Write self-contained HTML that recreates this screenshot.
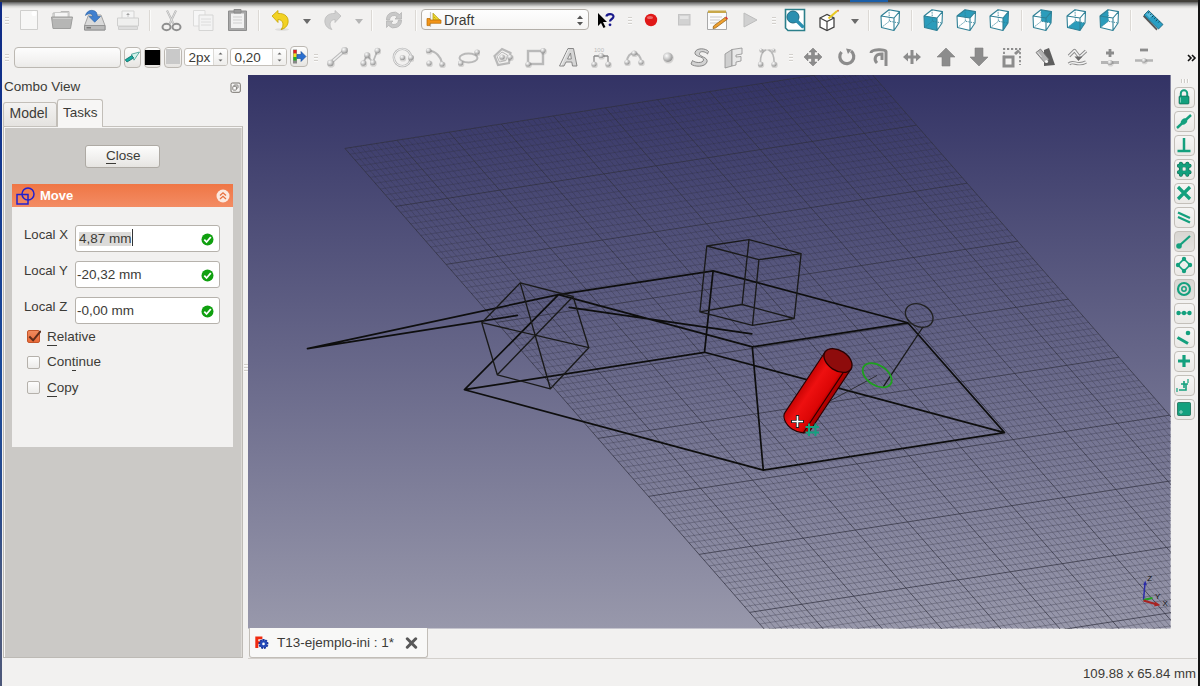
<!DOCTYPE html><html><head><meta charset="utf-8"><style>
*{box-sizing:border-box;margin:0;padding:0}
html,body{width:1200px;height:686px;overflow:hidden;background:#f2f1f0;font-family:"Liberation Sans",sans-serif;color:#3c3c3c}
.a{position:absolute}
.t{position:absolute;white-space:pre;font-size:13.5px;line-height:16px;color:#3c3b37}
.btn{position:absolute;border:1px solid #b8b4ae;border-radius:3px;background:linear-gradient(#fdfdfc,#f0efed 60%,#e6e4e1)}
.grip{position:absolute;width:4px;height:8px;background:repeating-linear-gradient(#d3d0cc 0 1px,#fbfbfa 1px 2px,transparent 2px 3px)}
.sep{position:absolute;width:1px;height:21px;top:9.5px;background:#dcd9d5;box-shadow:1px 0 0 #fbfbfa}
.inp{position:absolute;background:#fff;border:1px solid #b6b2ac;border-radius:3px}
.cb{position:absolute;width:13px;height:13px;border:1px solid #b5b1ab;border-radius:2px;background:linear-gradient(#fdfdfd,#ecebe9)}
u{text-decoration:none;border-bottom:1px solid #3c3b37;padding-bottom:0.5px}
</style></head><body><svg width="0" height="0" style="position:absolute"><defs><radialGradient id="sph" cx="0.38" cy="0.35" r="0.65"><stop offset="0" stop-color="#fbfbfb"/><stop offset="0.55" stop-color="#c9c9c9"/><stop offset="1" stop-color="#959595"/></radialGradient></defs></svg><div class="a" style="left:0;top:0;width:1200px;height:9px;background:linear-gradient(#43413b 0,#43413b 1.7px,#6a6a69 2.5px,#888887 3.5px,#b0b0af 5px,#d8d8d6 6.5px,#eceae8 8px,#f2f1f0 9px)"></div><div class="a" style="left:850px;top:0;width:38px;height:2px;background:#1c5fa8"></div><div class="a" style="left:0;top:2px;width:2px;height:684px;background:linear-gradient(#0f2a85,#1a4a9a 55%,#2a4a8a 75%,#4a5a80 85%,#4d587a)"></div><div class="a" style="left:1198px;top:0;width:2px;height:686px;background:#141414"></div><div class="grip" style="left:5px;top:17px"></div><svg class="a" style="left:19px;top:9px" width="20" height="22" viewBox="0 0 20 22"><path d="M1.5 1.5H18.5V20.5H1.5Z" fill="#f7f7f6" stroke="#cfcfcd" stroke-width="1"/><circle cx="15" cy="4.5" r="2.5" fill="#fff"/></svg><svg class="a" style="left:50px;top:9px" width="24" height="22" viewBox="0 0 24 22"><path d="M3 4H10L11 2.5H19V9H3Z" fill="#e9e9e8" stroke="#b9b9b8"/><path d="M4.5 3.5H18V12H4.5Z" fill="#f5f5f5" stroke="#c4c4c3" stroke-width="0.8"/><path d="M1.5 8H22.5L20.5 19.5H3Z" fill="#b6b6b5" stroke="#9e9e9d"/><path d="M3 9.5H21.5" stroke="#cececd"/></svg><svg class="a" style="left:83px;top:8px" width="24" height="24" viewBox="0 0 24 24"><path d="M5.5 7H18L22 17.5V22H1.5V17.5Z" fill="#dadada" stroke="#9c9c9c" stroke-width="0.9"/><path d="M1.5 17.5H22V22H1.5Z" fill="#b9b9b9" stroke="#8e8e8e" stroke-width="0.9"/><path d="M3.5 19.8H8" stroke="#6a6a6a" stroke-width="1.2"/><path d="M2.5 7.5C3.5 2.5 10 0.5 13.5 4.5L14.5 8.5H17.5L11.7 14.2L6 8.5H9.8C9.3 5.5 6 4.5 2.5 7.5Z" fill="#3f7fcf" stroke="#2a5fa0" stroke-width="0.6"/></svg><svg class="a" style="left:116px;top:9px" width="24" height="22" viewBox="0 0 24 22"><path d="M6 2H18V10H6Z" fill="#f4f4f4" stroke="#d3d3d2"/><path d="M12 4V8M10.5 5.5L12 4L13.5 5.5" stroke="#c6c6c6"/><path d="M1.5 9H22.5V17H1.5Z" fill="#efefee" stroke="#cfcfce"/><path d="M2.5 17.5H21.5V20.5H2.5Z" fill="#dedede" stroke="#cfcfce"/></svg><div class="sep" style="left:149px"></div><svg class="a" style="left:161px;top:9px" width="21" height="23" viewBox="0 0 21 23"><path d="M6 1.5L12.5 15M15 1.5L8.5 15" stroke="#b2b2b2" stroke-width="2"/><path d="M6 1.5L12.5 15M15 1.5L8.5 15" stroke="#e6e6e6" stroke-width="0.8"/><ellipse cx="5.5" cy="18" rx="4" ry="3.2" fill="none" stroke="#8f8f8f" stroke-width="2"/><ellipse cx="15.5" cy="18" rx="4" ry="3.2" fill="none" stroke="#8f8f8f" stroke-width="2"/></svg><svg class="a" style="left:192px;top:9px" width="23" height="23" viewBox="0 0 23 23"><path d="M1.5 1.5H13V17H1.5Z" fill="#f6f6f6" stroke="#dcdcdb"/><path d="M7 6H21V21.5H7Z" fill="#f3f3f3" stroke="#d5d5d4"/><path d="M9 10H19M9 13H19M9 16H19" stroke="#dcdcdc"/></svg><svg class="a" style="left:227px;top:8px" width="21" height="24" viewBox="0 0 21 24"><path d="M1.5 3H19.5V22.5H1.5Z" fill="#a8a8a8" stroke="#8e8e8e"/><path d="M4 5.5H17V20H4Z" fill="#f2f2f2"/><path d="M7 1.5H14V5H7Z" fill="#9d9d9d" stroke="#8a8a8a"/><path d="M6 9H15M6 12H15M6 15H15" stroke="#cfcfcf"/></svg><div class="sep" style="left:258px"></div><svg class="a" style="left:270px;top:9px" width="22" height="22" viewBox="0 0 22 22"><path d="M2 7L8 1.5V4.5C15 4 19 8 18 14C17 18 14 20 11 20.5C14 17.5 14 10.5 8 10.5V13.5Z" fill="#f2d224" stroke="#c7a400" stroke-width="0.8"/><ellipse cx="12" cy="20.5" rx="7" ry="1.3" fill="#000" opacity="0.08"/></svg><svg class="a" style="left:302.5px;top:19px" width="8" height="6" viewBox="0 0 8 6"><path d="M0 0H8L4 5Z" fill="#6a6a6a"/></svg><svg class="a" style="left:321px;top:9px" width="22" height="22" viewBox="0 0 22 22"><path d="M20 7L14 1.5V4.5C7 4 3 8 4 14C5 18 8 20 11 20.5C8 17.5 8 10.5 14 10.5V13.5Z" fill="#cfcfcf" stroke="#bdbdbd" stroke-width="0.8"/></svg><svg class="a" style="left:354.5px;top:19px" width="8" height="6" viewBox="0 0 8 6"><path d="M0 0H8L4 5Z" fill="#b5b5b5"/></svg><div class="sep" style="left:371px"></div><svg class="a" style="left:383px;top:9px" width="22" height="22" viewBox="0 0 22 22"><path d="M3.5 11A7.5 7.5 0 0 1 16.5 5.5L18.5 3.5V10H12L14.2 7.8A4.5 4.5 0 0 0 6.5 11Z" fill="#c8c8c8" stroke="#b0b0b0" stroke-width="0.7"/><path d="M18.5 11A7.5 7.5 0 0 1 5.5 16.5L3.5 18.5V12H10L7.8 14.2A4.5 4.5 0 0 0 15.5 11Z" fill="#c8c8c8" stroke="#b0b0b0" stroke-width="0.7"/></svg><div class="sep" style="left:415px"></div><div class="btn" style="left:421px;top:9px;width:167.5px;height:21px;border-color:#b3afa9;border-radius:4px;background:linear-gradient(#fefefe,#f5f4f3)"></div><svg class="a" style="left:425px;top:11px" width="18" height="18" viewBox="0 0 18 18"><path d="M5.5 1V16" stroke="#c8c8c8" stroke-width="1.2"/><path d="M8 2.2V9.2H15Z" fill="#eed630" stroke="#a89000" stroke-width="0.7"/><path d="M9 6L10.5 7.5" stroke="#a89000" stroke-width="0.6"/><path d="M2 7.5H5V9H16V12.3H5V14.6H2Z" fill="#f29418" stroke="#b86a00" stroke-width="0.7"/></svg><div class="t" style="left:444px;top:12px;font-size:14px">Draft</div><svg class="a" style="left:576px;top:14px" width="8" height="13" viewBox="0 0 8 13"><path d="M1 5L4 1.5L7 5ZM1 8L4 11.5L7 8Z" fill="#555"/></svg><svg class="a" style="left:597px;top:12px" width="19" height="17" viewBox="0 0 19 17"><path d="M1 1V14L4 11L6.5 16L8.5 15L6 10H10Z" fill="#000"/><path d="M9.5 4.5C9.5 1.5 16.5 1 16.5 4.5C16.5 7 13 7 13 9.5" stroke="#1a1a8c" stroke-width="2.2" fill="none"/><circle cx="13" cy="12.8" r="1.4" fill="#1a1a8c"/></svg><div class="grip" style="left:628px;top:17px"></div><svg class="a" style="left:644px;top:13px" width="14" height="14" viewBox="0 0 14 14"><circle cx="7" cy="7" r="6.2" fill="#e01818"/><ellipse cx="6" cy="4.5" rx="3" ry="1.6" fill="#fff" opacity="0.35"/></svg><svg class="a" style="left:678px;top:14px" width="13" height="12" viewBox="0 0 13 12"><rect x="0.5" y="0.5" width="11.5" height="10.5" fill="#d2d2d2" stroke="#c4c4c4"/><rect x="2" y="2" width="8.5" height="3" fill="#e4e4e4"/></svg><svg class="a" style="left:706px;top:9px" width="23" height="22" viewBox="0 0 23 22"><path d="M1.5 3H20.5V20.5H1.5Z" fill="#fbfbfb" stroke="#a9a9a9"/><path d="M2 1.5H20V4H2Z" fill="#c8a84a"/><path d="M4 8H16M4 11H14M4 14H12" stroke="#c9c9c9"/><path d="M7.5 17L19 8.5L21 10.5L9.5 19L7 19.5Z" fill="#f0a030" stroke="#8a5a10" stroke-width="0.7"/><path d="M19 8.5L21 10.5L22 9.5L20 7.5Z" fill="#e03030"/></svg><svg class="a" style="left:743px;top:12px" width="15" height="16" viewBox="0 0 15 16"><path d="M1 1L14 8L1 15Z" fill="#d0d0d0" stroke="#bdbdbd"/></svg><div class="grip" style="left:772px;top:17px"></div><svg class="a" style="left:784px;top:8px" width="22" height="24" viewBox="0 0 22 24"><path d="M1.5 1.5H20.5V22.5H4L1.5 20Z" fill="#fff" stroke="#2b7f8a" stroke-width="1.6"/><circle cx="9" cy="9" r="6" fill="#2a8fb0" stroke="#1d6a80" stroke-width="1"/><path d="M13 13L18.5 18.5" stroke="#2a8fb0" stroke-width="3.2" stroke-linecap="round"/></svg><svg class="a" style="left:818px;top:9px" width="22" height="23" viewBox="0 0 22 23"><path d="M2 9L9 5.5L16 9V18L9 21.5L2 18Z" fill="#fff" stroke="#444" stroke-width="1.3"/><path d="M2 9L9 12.5L16 9M9 12.5V21.5" stroke="#444" stroke-width="1.2" fill="none"/><path d="M10.5 9.5L19 2" stroke="#e8c820" stroke-width="2"/><circle cx="20" cy="1.8" r="1" fill="#e07a30"/></svg><svg class="a" style="left:850.5px;top:19px" width="8" height="6" viewBox="0 0 8 6"><path d="M0 0H8L4 5Z" fill="#6a6a6a"/></svg><div class="sep" style="left:868px"></div><svg class="a" style="left:880px;top:9px" width="21" height="23" viewBox="0 0 21 23"><polygon points="1,7 9,0.8 19.5,2.6 19,14 14,21.5 1.5,18.5" fill="#fff"/><path d="M9 0.8L9.4 12.2L19 14M9.4 12.2L1.5 18.5" stroke="#2f8096" stroke-width="0.9" stroke-dasharray="1.4 1" fill="none"/><path d="M1 7L14 9L14 21.5L1.5 18.5ZM1 7L9 0.8L19.5 2.6L14 9M19.5 2.6L19 14L14 21.5" stroke="#2f8096" stroke-width="1.1" fill="none" stroke-linejoin="round"/></svg><div class="sep" style="left:911px"></div><svg class="a" style="left:923px;top:9px" width="21" height="23" viewBox="0 0 21 23"><polygon points="1,7 9,0.8 19.5,2.6 19,14 14,21.5 1.5,18.5" fill="#fff"/><polygon points="1,7 14,9 14,21.5 1.5,18.5" fill="#2b9cbb"/><path d="M9 0.8L9.4 12.2L19 14M9.4 12.2L1.5 18.5" stroke="#2f8096" stroke-width="0.9" stroke-dasharray="1.4 1" fill="none"/><path d="M1 7L14 9L14 21.5L1.5 18.5ZM1 7L9 0.8L19.5 2.6L14 9M19.5 2.6L19 14L14 21.5" stroke="#2f8096" stroke-width="1.1" fill="none" stroke-linejoin="round"/></svg><svg class="a" style="left:956px;top:9px" width="21" height="23" viewBox="0 0 21 23"><polygon points="1,7 9,0.8 19.5,2.6 19,14 14,21.5 1.5,18.5" fill="#fff"/><polygon points="1,7 9,0.8 19.5,2.6 14,9" fill="#2b9cbb"/><path d="M9 0.8L9.4 12.2L19 14M9.4 12.2L1.5 18.5" stroke="#2f8096" stroke-width="0.9" stroke-dasharray="1.4 1" fill="none"/><path d="M1 7L14 9L14 21.5L1.5 18.5ZM1 7L9 0.8L19.5 2.6L14 9M19.5 2.6L19 14L14 21.5" stroke="#2f8096" stroke-width="1.1" fill="none" stroke-linejoin="round"/></svg><svg class="a" style="left:989px;top:9px" width="21" height="23" viewBox="0 0 21 23"><polygon points="1,7 9,0.8 19.5,2.6 19,14 14,21.5 1.5,18.5" fill="#fff"/><polygon points="14,9 19.5,2.6 19,14 14,21.5" fill="#2b9cbb"/><path d="M9 0.8L9.4 12.2L19 14M9.4 12.2L1.5 18.5" stroke="#2f8096" stroke-width="0.9" stroke-dasharray="1.4 1" fill="none"/><path d="M1 7L14 9L14 21.5L1.5 18.5ZM1 7L9 0.8L19.5 2.6L14 9M19.5 2.6L19 14L14 21.5" stroke="#2f8096" stroke-width="1.1" fill="none" stroke-linejoin="round"/></svg><div class="sep" style="left:1021px"></div><svg class="a" style="left:1032px;top:9px" width="21" height="23" viewBox="0 0 21 23"><polygon points="1,7 9,0.8 19.5,2.6 19,14 14,21.5 1.5,18.5" fill="#fff"/><polygon points="9,0.8 19.5,2.6 19,14 9.4,12.2" fill="#2b9cbb"/><path d="M9 0.8L9.4 12.2L19 14M9.4 12.2L1.5 18.5" stroke="#2f8096" stroke-width="0.9" stroke-dasharray="1.4 1" fill="none"/><path d="M1 7L14 9L14 21.5L1.5 18.5ZM1 7L9 0.8L19.5 2.6L14 9M19.5 2.6L19 14L14 21.5" stroke="#2f8096" stroke-width="1.1" fill="none" stroke-linejoin="round"/></svg><svg class="a" style="left:1065.5px;top:9px" width="21" height="23" viewBox="0 0 21 23"><polygon points="1,7 9,0.8 19.5,2.6 19,14 14,21.5 1.5,18.5" fill="#fff"/><polygon points="1.5,18.5 9.4,12.2 19,14 14,21.5" fill="#2b9cbb"/><path d="M9 0.8L9.4 12.2L19 14M9.4 12.2L1.5 18.5" stroke="#2f8096" stroke-width="0.9" stroke-dasharray="1.4 1" fill="none"/><path d="M1 7L14 9L14 21.5L1.5 18.5ZM1 7L9 0.8L19.5 2.6L14 9M19.5 2.6L19 14L14 21.5" stroke="#2f8096" stroke-width="1.1" fill="none" stroke-linejoin="round"/></svg><svg class="a" style="left:1098.5px;top:9px" width="21" height="23" viewBox="0 0 21 23"><polygon points="1,7 9,0.8 19.5,2.6 19,14 14,21.5 1.5,18.5" fill="#fff"/><polygon points="1,7 9,0.8 9.4,12.2 1.5,18.5" fill="#2b9cbb"/><path d="M9 0.8L9.4 12.2L19 14M9.4 12.2L1.5 18.5" stroke="#2f8096" stroke-width="0.9" stroke-dasharray="1.4 1" fill="none"/><path d="M1 7L14 9L14 21.5L1.5 18.5ZM1 7L9 0.8L19.5 2.6L14 9M19.5 2.6L19 14L14 21.5" stroke="#2f8096" stroke-width="1.1" fill="none" stroke-linejoin="round"/></svg><div class="sep" style="left:1130px"></div><svg class="a" style="left:1141px;top:9px" width="23" height="23" viewBox="0 0 23 23"><path d="M3 6L16.5 20L15.5 21.5L2 7.5Z" fill="#3a3a3a" opacity="0.85"/><path d="M3 6L7.5 1.5L22 15.5L17.5 20Z" fill="#2a9fc4" stroke="#145a72" stroke-width="0.8" stroke-linejoin="round"/><path d="M5 5L8 2.5L12 6.5L8.5 9Z" fill="#7fd4f0" opacity="0.6"/><path d="M8.5 2.8L6.8 4.4M10.5 4.7L9.3 5.9M12.5 6.6L10.8 8.2M14.5 8.5L13.3 9.7M16.5 10.4L14.8 12M18.5 12.3L17.3 13.5" stroke="#0a3040" stroke-width="0.9"/></svg><div class="grip" style="left:5px;top:54px"></div><div class="btn" style="left:13.5px;top:46.5px;width:107.5px;height:21px;border-color:#bcb8b2;border-radius:4px;background:linear-gradient(#fdfdfd,#f2f1f0 70%,#ebeae8)"></div><div class="btn" style="left:123.5px;top:46.5px;width:17.5px;height:21px;border-color:#bcb8b2;border-radius:4px"></div><svg class="a" style="left:124px;top:49px" width="17" height="16" viewBox="0 0 17 16"><path d="M7.5 5.2L15.5 3L10 11.2Z" fill="#d4f4ec" stroke="#3a9a90" stroke-width="0.8" stroke-linejoin="round"/><path d="M1.2 10.8L7.8 6.6L9.6 9L3 13Z" fill="#16aca2" stroke="#0b6a62" stroke-width="0.8" stroke-linejoin="round"/></svg><div class="btn" style="left:143.5px;top:46.5px;width:17.5px;height:21px;border-color:#bcb8b2;border-radius:4px"></div><div class="a" style="left:145px;top:49.5px;width:15px;height:15px;background:#000"></div><div class="btn" style="left:164px;top:46.5px;width:17.5px;height:21px;border-color:#bcb8b2;border-radius:4px"></div><div class="a" style="left:165.5px;top:49px;width:14.5px;height:15px;background:#c9c9c9"></div><div class="inp" style="left:184px;top:48px;width:43.5px;height:17.5px;border-color:#c4c0ba;overflow:hidden"><div class="a" style="left:27.5px;top:0;width:20px;height:16px;border-left:1px solid #dcdad6;background:linear-gradient(#fefefe,#eeedeb)"></div></div><div class="t" style="left:188.5px;top:50px;font-size:13.5px">2px</div><svg class="a" style="left:216.5px;top:50px" width="7" height="14" viewBox="0 0 7 14"><path d="M1.5 4.5L3.5 2.5L5.5 4.5ZM1.5 9.5L3.5 11.5L5.5 9.5Z" fill="#666"/></svg><div class="inp" style="left:230px;top:48px;width:57px;height:17.5px;border-color:#c4c0ba;overflow:hidden"><div class="a" style="left:41px;top:0;width:20px;height:16px;border-left:1px solid #dcdad6;background:linear-gradient(#fefefe,#eeedeb)"></div></div><div class="t" style="left:234.5px;top:50px;font-size:13.5px">0,20</div><svg class="a" style="left:276px;top:50px" width="7" height="14" viewBox="0 0 7 14"><path d="M1.5 4.5L3.5 2.5L5.5 4.5ZM1.5 9.5L3.5 11.5L5.5 9.5Z" fill="#666"/></svg><div class="btn" style="left:290px;top:46px;width:17.5px;height:21px;border-color:#bcb8b2;border-radius:4px"></div><svg class="a" style="left:291px;top:48px" width="16" height="17" viewBox="0 0 16 17"><rect x="2" y="1.5" width="4" height="14" fill="#888"/><rect x="2.5" y="2" width="3" height="3.5" fill="#e02020"/><rect x="2.5" y="5.5" width="3" height="3.5" fill="#f0e020"/><rect x="2.5" y="9" width="3" height="3.5" fill="#20b020"/><path d="M6 6.5H10V3.5L15 8.5L10 13.5V10.5H6Z" fill="#2a6fd0" stroke="#1a4a90" stroke-width="0.6"/></svg><div class="grip" style="left:314px;top:54px"></div><svg class="a" style="left:326px;top:47px" width="22" height="22" viewBox="0 0 22 22"><path d="M5 15.4L18 4" stroke="#b9b9b9" stroke-width="3.5"/><path d="M5 15.4L18 4" stroke="#eee" stroke-width="1.5"/><circle cx="5.0" cy="16.9" r="3.8000000000000003" fill="#000" opacity="0.12"/><circle cx="4.4" cy="16" r="3.2" fill="url(#sph)"/><circle cx="19.1" cy="4.2" r="3.8000000000000003" fill="#000" opacity="0.12"/><circle cx="18.5" cy="3.3" r="3.2" fill="url(#sph)"/></svg><svg class="a" style="left:359px;top:47px" width="22" height="22" viewBox="0 0 22 22"><path d="M4.3 16L8 8L13.8 15.5L18.4 3.5" stroke="#b9b9b9" stroke-width="1.8" fill="none"/><circle cx="4.8999999999999995" cy="16.9" r="3.4" fill="#000" opacity="0.12"/><circle cx="4.3" cy="16" r="2.8" fill="url(#sph)"/><circle cx="8.6" cy="8.9" r="3.4" fill="#000" opacity="0.12"/><circle cx="8" cy="8" r="2.8" fill="url(#sph)"/><circle cx="14.4" cy="16.4" r="3.4" fill="#000" opacity="0.12"/><circle cx="13.8" cy="15.5" r="2.8" fill="url(#sph)"/><circle cx="19.0" cy="4.4" r="3.4" fill="#000" opacity="0.12"/><circle cx="18.4" cy="3.5" r="2.8" fill="url(#sph)"/></svg><svg class="a" style="left:392px;top:47px" width="22" height="22" viewBox="0 0 22 22"><circle cx="10.4" cy="10.5" r="8.6" fill="none" stroke="#b9b9b9" stroke-width="2.4"/><circle cx="10.4" cy="10.5" r="8.6" fill="none" stroke="#f6f6f6" stroke-width="0.9"/><circle cx="11.0" cy="11.4" r="3.2" fill="#000" opacity="0.12"/><circle cx="10.4" cy="10.5" r="2.6" fill="url(#sph)"/><circle cx="19.400000000000002" cy="11.4" r="3.4" fill="#000" opacity="0.12"/><circle cx="18.8" cy="10.5" r="2.8" fill="url(#sph)"/></svg><svg class="a" style="left:425px;top:47px" width="22" height="22" viewBox="0 0 22 22"><path d="M3.5 3.5C11 4 16 10 17 16" stroke="#b9b9b9" stroke-width="2.2" fill="none"/><circle cx="4.1" cy="4.4" r="3.2" fill="#000" opacity="0.12"/><circle cx="3.5" cy="3.5" r="2.6" fill="url(#sph)"/><circle cx="17.6" cy="17.9" r="3.2" fill="#000" opacity="0.12"/><circle cx="17" cy="17" r="2.6" fill="url(#sph)"/><circle cx="4.6" cy="16.9" r="3.2" fill="#000" opacity="0.12"/><circle cx="4" cy="16" r="2.6" fill="url(#sph)"/></svg><svg class="a" style="left:458px;top:47px" width="22" height="22" viewBox="0 0 22 22"><ellipse cx="10.5" cy="11" rx="9" ry="4.5" fill="none" stroke="#b9b9b9" stroke-width="2"/><circle cx="19.6" cy="5.9" r="3.2" fill="#000" opacity="0.12"/><circle cx="19" cy="5" r="2.6" fill="url(#sph)"/><circle cx="3.1" cy="16.9" r="3.2" fill="#000" opacity="0.12"/><circle cx="2.5" cy="16" r="2.6" fill="url(#sph)"/></svg><svg class="a" style="left:492px;top:47px" width="22" height="22" viewBox="0 0 22 22"><path d="M10 2L18.5 6L17 16L6 18L2.5 9Z" fill="none" stroke="#b9b9b9" stroke-width="2.2"/><path d="M10 5L15.5 8L14 13.5L7.5 15L5 9.5Z" fill="none" stroke="#b9b9b9" stroke-width="1"/><circle cx="10.6" cy="10.9" r="3.2" fill="#000" opacity="0.12"/><circle cx="10" cy="10" r="2.6" fill="url(#sph)"/><circle cx="18.6" cy="10.9" r="3.2" fill="#000" opacity="0.12"/><circle cx="18" cy="10" r="2.6" fill="url(#sph)"/></svg><svg class="a" style="left:525px;top:47px" width="22" height="22" viewBox="0 0 22 22"><rect x="3" y="4" width="15" height="13" fill="none" stroke="#b9b9b9" stroke-width="2.4"/><circle cx="18.6" cy="4.4" r="3.2" fill="#000" opacity="0.12"/><circle cx="18" cy="3.5" r="2.6" fill="url(#sph)"/><circle cx="3.6" cy="17.9" r="3.2" fill="#000" opacity="0.12"/><circle cx="3" cy="17" r="2.6" fill="url(#sph)"/></svg><svg class="a" style="left:558px;top:47px" width="22" height="22" viewBox="0 0 22 22"><path d="M1.5 19L10 1.5H15.5L19 19H14.5L13.8 15H8L6 19Z M9.5 12H13.3L12.5 6Z" fill="#d6d6d6" fill-rule="evenodd" stroke="#7e7e7e" stroke-width="0.9" stroke-linejoin="round"/><path d="M3 18.5L10.5 2.5" stroke="#f8f8f8" stroke-width="0.8"/></svg><svg class="a" style="left:591px;top:47px" width="22" height="22" viewBox="0 0 22 22"><path d="M3 9V17M17 9V17M3 9H17" stroke="#8a8a8a" stroke-width="1.3" fill="none"/><circle cx="3.6" cy="17.9" r="3.2" fill="#000" opacity="0.12"/><circle cx="3" cy="17" r="2.6" fill="url(#sph)"/><circle cx="17.6" cy="17.9" r="3.2" fill="#000" opacity="0.12"/><circle cx="17" cy="17" r="2.6" fill="url(#sph)"/><circle cx="10.6" cy="9.4" r="3.2" fill="#000" opacity="0.12"/><circle cx="10" cy="8.5" r="2.6" fill="url(#sph)"/><text x="3" y="5" font-family="Liberation Sans" font-size="6" fill="#bbb">100</text></svg><svg class="a" style="left:624px;top:47px" width="22" height="22" viewBox="0 0 22 22"><path d="M3 15C3 3 17 3 17 15" stroke="#b9b9b9" stroke-width="2" fill="none"/><circle cx="3.6" cy="15.9" r="3.2" fill="#000" opacity="0.12"/><circle cx="3" cy="15" r="2.6" fill="url(#sph)"/><circle cx="17.6" cy="15.9" r="3.2" fill="#000" opacity="0.12"/><circle cx="17" cy="15" r="2.6" fill="url(#sph)"/><circle cx="10.6" cy="6.9" r="3.2" fill="#000" opacity="0.12"/><circle cx="10" cy="6" r="2.6" fill="url(#sph)"/></svg><svg class="a" style="left:657px;top:47px" width="22" height="22" viewBox="0 0 22 22"><circle cx="11.4" cy="11.1" r="5.3999999999999995" fill="#000" opacity="0.12"/><circle cx="10.8" cy="10.2" r="4.8" fill="url(#sph)"/></svg><svg class="a" style="left:690px;top:47px" width="22" height="22" viewBox="0 0 22 22"><path d="M18.5 4.5C16 1 6 0.5 5 5.5C4 10 14 9 13.5 13C13 16.5 5 16 2.5 13.5L1 17C4 20 15 20.5 17 15C18.5 10 9 10 9.5 6.5C10 3.5 15.5 4.5 17.5 7Z" fill="#d2d2d2" stroke="#7e7e7e" stroke-width="0.9" stroke-linejoin="round"/></svg><svg class="a" style="left:723px;top:47px" width="22" height="22" viewBox="0 0 22 22"><path d="M2 7L9 2.5V19L2 21Z" fill="#cfcfcf" stroke="#909090" stroke-width="0.8"/><path d="M9 2.5L19 1V7L13 8V10L18 9.5V14L13 15V18L9 19Z" fill="#e8e8e8" stroke="#909090" stroke-width="0.8"/></svg><svg class="a" style="left:757px;top:47px" width="22" height="22" viewBox="0 0 22 22"><path d="M3.5 17C3 10 5 4 9 3M17 17C17.5 10 15.5 4 11.5 3" stroke="#b9b9b9" stroke-width="1.6" fill="none"/><path d="M4 3L17 3" stroke="#aaa" stroke-width="0.6"/><circle cx="4.1" cy="17.9" r="3.2" fill="#000" opacity="0.12"/><circle cx="3.5" cy="17" r="2.6" fill="url(#sph)"/><circle cx="17.6" cy="17.9" r="3.2" fill="#000" opacity="0.12"/><circle cx="17" cy="17" r="2.6" fill="url(#sph)"/><circle cx="4.6" cy="3.9" r="2.2" fill="#000" opacity="0.12"/><circle cx="4" cy="3" r="1.6" fill="url(#sph)"/><circle cx="17.1" cy="3.9" r="2.2" fill="#000" opacity="0.12"/><circle cx="16.5" cy="3" r="1.6" fill="url(#sph)"/></svg><div class="grip" style="left:789px;top:54px"></div><svg class="a" style="left:803px;top:47px" width="21" height="21" viewBox="0 0 21 21"><path d="M10 1L14 5H11.5V8.5H15V6L19 10L15 14V11.5H11.5V15H14L10 19L6 15H8.5V11.5H5V14L1 10L5 6V8.5H8.5V5H6Z" fill="#8c8c8c" stroke="#777" stroke-width="0.5"/></svg><svg class="a" style="left:836px;top:47px" width="21" height="21" viewBox="0 0 21 21"><path d="M5.5 5A7 7 0 1 0 15 4" stroke="#8c8c8c" stroke-width="3.2" fill="none"/><path d="M10 1.5L15.5 2.5L12 7Z" fill="#8c8c8c"/></svg><svg class="a" style="left:869px;top:47px" width="21" height="21" viewBox="0 0 21 21"><path d="M2 6C2 2 17 2 17 4.5V19M8 16C5 13 5 7 13 7V13" stroke="#8c8c8c" stroke-width="3" fill="none"/></svg><svg class="a" style="left:902px;top:47px" width="21" height="21" viewBox="0 0 21 21"><path d="M1 10L6 5.5V14.5ZM19 10L14 5.5V14.5Z" fill="#8c8c8c"/><path d="M5 10H15M10 3V17" stroke="#8c8c8c" stroke-width="3"/></svg><svg class="a" style="left:936px;top:47px" width="21" height="21" viewBox="0 0 21 21"><path d="M10 1L19 10H14V19H6V10H1Z" fill="#8c8c8c" stroke="#808080" stroke-width="0.6"/></svg><svg class="a" style="left:969px;top:47px" width="21" height="21" viewBox="0 0 21 21"><path d="M10 19L19 10H14V1H6V10H1Z" fill="#8c8c8c" stroke="#808080" stroke-width="0.6"/></svg><svg class="a" style="left:1002px;top:47px" width="21" height="21" viewBox="0 0 21 21"><path d="M2 19V2H18V18" stroke="#8c8c8c" stroke-width="1.8" stroke-dasharray="2.2 1.8" fill="none"/><rect x="2" y="10" width="9" height="9" fill="none" stroke="#8c8c8c" stroke-width="3"/><path d="M12 6L16 2.5L18 4.5L14 8Z" fill="#8c8c8c"/></svg><svg class="a" style="left:1035px;top:47px" width="21" height="21" viewBox="0 0 21 21"><path d="M9 3L14 1L20 18L9 19Z" fill="#5e5e5e"/><path d="M1 5.5L5.5 2L14 12.5L10 16Z" fill="#b4b4b4" stroke="#6e6e6e" stroke-width="0.8"/><path d="M2.5 5L6.5 10" stroke="#e0e0e0" stroke-width="1"/><circle cx="11.5" cy="14.5" r="1.6" fill="#f4f4f4"/></svg><svg class="a" style="left:1067px;top:47px" width="21" height="21" viewBox="0 0 21 21"><path d="M2 9L7.5 3.5L12.5 10L19 4M2 17C6 12.5 10 20 19 15" stroke="#8c8c8c" stroke-width="3.4" fill="none" stroke-linejoin="round"/><path d="M2 9L7.5 3.5L12.5 10L19 4M2 17C6 12.5 10 20 19 15" stroke="#f2f2f2" stroke-width="1.5" fill="none" stroke-linejoin="round"/><path d="M7.5 9.5H15.5L11.5 14Z" fill="#6a6a6a"/></svg><svg class="a" style="left:1100px;top:47px" width="21" height="21" viewBox="0 0 21 21"><path d="M10 2V10M6 6H14" stroke="#8c8c8c" stroke-width="2.8"/><path d="M1 15.5H19" stroke="#b5b5b5" stroke-width="3"/><circle cx="10.6" cy="16.4" r="3.1" fill="#000" opacity="0.12"/><circle cx="10" cy="15.5" r="2.5" fill="url(#sph)"/></svg><svg class="a" style="left:1134px;top:47px" width="21" height="21" viewBox="0 0 21 21"><path d="M6 3H14" stroke="#8c8c8c" stroke-width="2.8"/><path d="M1 13.5H19" stroke="#b5b5b5" stroke-width="2.5"/><circle cx="10.6" cy="14.4" r="2.9" fill="#000" opacity="0.12"/><circle cx="10" cy="13.5" r="2.3" fill="url(#sph)"/></svg><svg class="a" style="left:1187px;top:54px" width="10" height="8" viewBox="0 0 10 8"><path d="M1 1L4 4L1 7M5 1L8 4L5 7" stroke="#111" stroke-width="1.6" fill="none"/></svg><div class="t" style="left:4px;top:79px;font-size:13.5px">Combo View</div><svg class="a" style="left:229.5px;top:81.5px" width="11" height="11" viewBox="0 0 11 11"><rect x="1" y="1" width="9.3" height="9.3" rx="1.3" fill="#f6f5f4" stroke="#77746f" stroke-width="1"/><rect x="4" y="3" width="4" height="3.2" rx="0.6" fill="#f0f0f0" stroke="#77746f" stroke-width="0.9"/><rect x="2.8" y="4.3" width="3.6" height="3.8" rx="0.6" fill="#fff" stroke="#77746f" stroke-width="0.9"/></svg><div class="a" style="left:2.5px;top:101.5px;width:54px;height:25px;border:1px solid #c2beb8;border-bottom:none;border-radius:3px 3px 0 0;background:linear-gradient(#f3f2f1,#e4e2df)"></div><div class="t" style="left:9.5px;top:105px;font-size:14px">Model</div><div class="a" style="left:56.5px;top:98.5px;width:46px;height:28.5px;border:1px solid #c2beb8;border-bottom:none;border-radius:3px 3px 0 0;background:#f7f6f5"></div><div class="t" style="left:63px;top:105px;font-size:13.5px">Tasks</div><div class="a" style="left:3px;top:126px;width:239.5px;height:532px;background:#cbc9c6;border:1px solid #bdbab5;border-top-color:#c5c2bd;box-shadow:inset 1px 1px 0 #f6f5f4,inset -1px 0 0 #dcdad6"></div><div class="a" style="left:244px;top:364px;width:3.5px;height:8px;background:repeating-linear-gradient(#d0cdc9 0 1px,#fbfbfa 1px 2px,transparent 2px 3px)"></div><div class="a" style="left:57.5px;top:126px;width:44px;height:1px;background:#f7f6f5"></div><div class="btn" style="left:85px;top:145px;width:75px;height:22.5px;border-color:#aeaaa4"></div><div class="t" style="left:106px;top:147.5px;font-size:13.5px"><u>C</u>lose</div><div class="a" style="left:12px;top:184px;width:221px;height:22.5px;background:linear-gradient(#ef7645,#f38c64)"></div><svg class="a" style="left:15px;top:186px" width="22" height="20" viewBox="0 0 22 20"><rect x="2" y="8.5" width="11" height="9.5" fill="none" stroke="#2020d0" stroke-width="1.5"/><circle cx="13" cy="8" r="6" fill="none" stroke="#2020d0" stroke-width="1.5"/></svg><div class="t" style="left:40px;top:188px;font-size:13px;font-weight:bold;color:#fff">Move</div><svg class="a" style="left:215.5px;top:188.5px" width="14" height="14" viewBox="0 0 14 14"><circle cx="7" cy="7" r="6.5" fill="#fbe9e0"/><path d="M4 6.5L7 3.8L10 6.5M4 10L7 7.3L10 10" stroke="#e8703f" stroke-width="1.3" fill="none"/></svg><div class="a" style="left:12px;top:206.5px;width:221px;height:240px;background:#f2f1f0"></div><div class="t" style="left:24px;top:227.0px;font-size:13.2px">Local X</div><div class="inp" style="left:75px;top:224.5px;width:144.5px;height:27.5px"></div><div class="a" style="left:79px;top:231.5px;width:52px;height:14px;background:#dcdbd9"></div><div class="a" style="left:132px;top:229.0px;width:1px;height:17px;background:#333"></div><div class="t" style="left:79px;top:230.5px;font-size:13.5px">4,87 mm</div><svg class="a" style="left:201px;top:232.5px" width="13" height="13" viewBox="0 0 13 13"><circle cx="6.5" cy="6.5" r="6" fill="#10a010"/><path d="M3.3 6.6L5.6 9L9.8 4" stroke="#fff" stroke-width="1.8" fill="none"/></svg><div class="t" style="left:24px;top:263.0px;font-size:13.2px">Local Y</div><div class="inp" style="left:75px;top:260.5px;width:144.5px;height:27.5px"></div><div class="t" style="left:77px;top:266.5px;font-size:13.5px">-20,32 mm</div><svg class="a" style="left:201px;top:268.5px" width="13" height="13" viewBox="0 0 13 13"><circle cx="6.5" cy="6.5" r="6" fill="#10a010"/><path d="M3.3 6.6L5.6 9L9.8 4" stroke="#fff" stroke-width="1.8" fill="none"/></svg><div class="t" style="left:24px;top:299.0px;font-size:13.2px">Local Z</div><div class="inp" style="left:75px;top:296.5px;width:144.5px;height:27.5px"></div><div class="t" style="left:77px;top:302.5px;font-size:13.5px">-0,00 mm</div><svg class="a" style="left:201px;top:304.5px" width="13" height="13" viewBox="0 0 13 13"><circle cx="6.5" cy="6.5" r="6" fill="#10a010"/><path d="M3.3 6.6L5.6 9L9.8 4" stroke="#fff" stroke-width="1.8" fill="none"/></svg><div class="a" style="left:26.5px;top:330px;width:13px;height:13px;border:1px solid #c4562a;border-radius:2px;background:linear-gradient(#f08a5d,#e96a38)"></div><svg class="a" style="left:27px;top:328px" width="14" height="14" viewBox="0 0 14 14"><path d="M2.3 8.5L6.1 12.3L13.8 3" stroke="#5e2c1a" stroke-width="2" fill="none"/></svg><div class="t" style="left:47px;top:329px;font-size:13.5px"><u>R</u>elative</div><div class="cb" style="left:26.5px;top:355.5px"></div><div class="t" style="left:47px;top:354px;font-size:13.5px">Con<u>t</u>inue</div><div class="cb" style="left:26.5px;top:381px"></div><div class="t" style="left:47px;top:380px;font-size:13.5px"><u>C</u>opy</div><svg style="position:absolute;left:248px;top:75px" width="922.6" height="553.5" viewBox="248 75 922.6 553.5"><defs><linearGradient id="bg" x1="0" y1="0" x2="0" y2="1"><stop offset="0" stop-color="#333365"/><stop offset="1" stop-color="#9898ab"/></linearGradient><filter id="soft" x="0" y="0" width="1" height="1"><feGaussianBlur stdDeviation="0.4"/></filter><linearGradient id="cyl" x1="0" y1="0" x2="1" y2="0"><stop offset="0" stop-color="#c80404"/><stop offset="0.3" stop-color="#ee1010"/><stop offset="0.75" stop-color="#dc0606"/><stop offset="0.86" stop-color="#b80000"/><stop offset="1" stop-color="#a80000"/></linearGradient></defs><rect x="248" y="75" width="922.6" height="553.5" fill="url(#bg)"/><g filter="url(#soft)"><path d="M350.1 147.6L856.1 727.6M350 154.2L871 73M355.3 146.8L861.3 726.8M355 160L876 78.8M360.5 146L866.5 726M360.1 165.8L881.1 84.6M365.7 145.2L871.7 725.2M365.1 171.6L886.1 90.4M370.9 144.3L877 724.3M370.2 177.4L891.2 96.2M376.2 143.5L882.2 723.5M375.3 183.2L896.3 102M381.4 142.7L887.4 722.7M380.3 189L901.3 107.8M386.6 141.9L892.6 721.9M385.4 194.8L906.4 113.6M391.8 141.1L897.8 721.1M390.4 200.6L911.4 119.4M402.2 139.5L908.2 719.5M400.6 212.2L921.6 131M407.4 138.7L913.4 718.7M405.6 218L926.6 136.8M412.6 137.8L918.6 717.8M410.7 223.8L931.7 142.6M417.8 137L923.8 717M415.7 229.6L936.7 148.4M423 136.2L929 716.2M420.8 235.4L941.8 154.2M428.3 135.4L934.3 715.4M425.9 241.2L946.9 160M433.5 134.6L939.5 714.6M430.9 247L951.9 165.8M438.7 133.8L944.7 713.8M436 252.8L957 171.6M443.9 133L949.9 713M441 258.6L962 177.4M454.3 131.3L960.3 711.3M451.2 270.2L972.2 189M459.5 130.5L965.5 710.5M456.2 276L977.2 194.8M464.7 129.7L970.7 709.7M461.3 281.8L982.3 200.6M469.9 128.9L975.9 708.9M466.3 287.6L987.3 206.4M475.1 128.1L981.1 708.1M471.4 293.4L992.4 212.2M480.4 127.3L986.4 707.3M476.5 299.2L997.5 218M485.6 126.5L991.6 706.5M481.5 305L1002.5 223.8M490.8 125.7L996.8 705.7M486.6 310.8L1007.6 229.6M496 124.9L1002 704.9M491.6 316.6L1012.6 235.4M506.4 123.2L1012.4 703.2M501.8 328.2L1022.8 247M511.6 122.4L1017.6 702.4M506.8 334L1027.8 252.8M516.8 121.6L1022.8 701.6M511.9 339.8L1032.9 258.6M522 120.8L1028 700.8M516.9 345.6L1037.9 264.4M527.2 120L1033.2 700M522 351.4L1043 270.2M532.5 119.2L1038.5 699.2M527.1 357.2L1048.1 276M537.7 118.4L1043.7 698.4M532.1 363L1053.1 281.8M542.9 117.5L1048.9 697.5M537.2 368.8L1058.2 287.6M548.1 116.7L1054.1 696.7M542.2 374.6L1063.2 293.4M558.5 115.1L1064.5 695.1M552.4 386.2L1073.4 305M563.7 114.3L1069.7 694.3M557.4 392L1078.4 310.8M568.9 113.5L1074.9 693.5M562.5 397.8L1083.5 316.6M574.1 112.7L1080.1 692.7M567.5 403.6L1088.5 322.4M579.4 111.9L1085.3 691.9M572.6 409.4L1093.6 328.2M584.6 111L1090.6 691M577.7 415.2L1098.7 334M589.8 110.2L1095.8 690.2M582.7 421L1103.7 339.8M595 109.4L1101 689.4M587.8 426.8L1108.8 345.6M600.2 108.6L1106.2 688.6M592.8 432.6L1113.8 351.4M610.6 107L1116.6 687M603 444.2L1124 363M615.8 106.2L1121.8 686.2M608 450L1129 368.8M621 105.4L1127 685.4M613.1 455.8L1134.1 374.6M626.2 104.6L1132.2 684.6M618.1 461.6L1139.1 380.4M631.5 103.7L1137.5 683.7M623.2 467.4L1144.2 386.2M636.7 102.9L1142.7 682.9M628.3 473.2L1149.3 392M641.9 102.1L1147.9 682.1M633.3 479L1154.3 397.8M647.1 101.3L1153.1 681.3M638.4 484.8L1159.4 403.6M652.3 100.5L1158.3 680.5M643.4 490.6L1164.4 409.4M662.7 98.9L1168.7 678.9M653.6 502.2L1174.6 421M667.9 98.1L1173.9 678.1M658.6 508L1179.6 426.8M673.1 97.2L1179.1 677.2M663.7 513.8L1184.7 432.6M678.3 96.4L1184.3 676.4M668.7 519.6L1189.7 438.4M683.5 95.6L1189.5 675.6M673.8 525.4L1194.8 444.2M688.8 94.8L1194.8 674.8M678.9 531.2L1199.9 450M694 94L1200 674M683.9 537L1204.9 455.8M699.2 93.2L1205.2 673.2M689 542.8L1210 461.6M704.4 92.4L1210.4 672.4M694 548.6L1215 467.4M714.8 90.7L1220.8 670.7M704.2 560.2L1225.2 479M720 89.9L1226 669.9M709.2 566L1230.2 484.8M725.2 89.1L1231.2 669.1M714.3 571.8L1235.3 490.6M730.4 88.3L1236.4 668.3M719.3 577.6L1240.3 496.4M735.6 87.5L1241.7 667.5M724.4 583.4L1245.4 502.2M740.9 86.7L1246.9 666.7M729.5 589.2L1250.5 508M746.1 85.9L1252.1 665.9M734.5 595L1255.5 513.8M751.3 85.1L1257.3 665.1M739.6 600.8L1260.6 519.6M756.5 84.3L1262.5 664.3M744.6 606.6L1265.6 525.4M766.9 82.6L1272.9 662.6M754.8 618.2L1275.8 537M772.1 81.8L1278.1 661.8M759.8 624L1280.8 542.8M777.3 81L1283.3 661M764.9 629.8L1285.9 548.6M782.5 80.2L1288.5 660.2M769.9 635.6L1290.9 554.4M787.8 79.4L1293.8 659.4M775 641.4L1296 560.2M793 78.6L1299 658.6M780.1 647.2L1301.1 566M798.2 77.8L1304.2 657.8M785.1 653L1306.1 571.8M803.4 76.9L1309.4 656.9M790.2 658.8L1311.2 577.6M808.6 76.1L1314.6 656.1M795.2 664.6L1316.2 583.4M819 74.5L1325 654.5M805.4 676.2L1326.4 595M824.2 73.7L1330.2 653.7M810.4 682L1331.4 600.8M829.4 72.9L1335.4 652.9M815.5 687.8L1336.5 606.6M834.6 72.1L1340.6 652.1M820.5 693.6L1341.5 612.4M839.8 71.3L1345.8 651.3M825.6 699.4L1346.6 618.2M845.1 70.4L1351.1 650.4M830.7 705.2L1351.7 624M850.3 69.6L1356.3 649.6M835.7 711L1356.7 629.8M855.5 68.8L1361.5 648.8M840.8 716.8L1361.8 635.6M860.7 68L1366.7 648M845.8 722.6L1366.8 641.4" stroke="#30303e" stroke-opacity="0.32" stroke-width="1" fill="none"/><path d="M344.9 148.4L850.9 728.4M344.9 148.4L865.9 67.2M397 140.3L903 720.3M395.5 206.4L916.5 125.2M449.1 132.2L955.1 712.2M446.1 264.4L967.1 183.2M501.2 124L1007.2 704M496.7 322.4L1017.7 241.2M553.3 115.9L1059.3 695.9M547.3 380.4L1068.3 299.2M605.4 107.8L1111.4 687.8M597.9 438.4L1118.9 357.2M657.5 99.7L1163.5 679.7M648.5 496.4L1169.5 415.2M709.6 91.6L1215.6 671.6M699.1 554.4L1220.1 473.2M761.7 83.4L1267.7 663.4M749.7 612.4L1270.7 531.2M813.8 75.3L1319.8 655.3M800.3 670.4L1321.3 589.2M865.9 67.2L1371.9 647.2M850.9 728.4L1371.9 647.2" stroke="#30303e" stroke-opacity="0.72" stroke-width="1" fill="none"/></g><path d="M464.5 389.7L558.5 294.6M464.5 389.7L704.5 352.3M464.5 389.7L763.3 470.1M704.5 352.3L713.1 270.9M704.5 352.3L1004.5 432.6M763.3 470.1L1004.5 432.6M763.3 470.1L752.3 346.9M752.3 346.9L907.8 322.8M907.8 322.8L1004.5 432.6M713.1 270.9L907.8 322.8M558.5 294.6L713.1 270.9M558.5 294.6L752.3 346.9M307.5 348.6L558.5 294.6M307.5 348.6L517.4 315.4M569.2 307.3L751.8 333.9" stroke="#0e0e0e" stroke-width="1.7" fill="none" stroke-linejoin="round" stroke-linecap="round"/><path d="M520.2 282.9L573.1 296.5L588.8 347.7L550.4 388.8L497.3 374.8L481.8 322.7L520.2 282.9M481.8 322.7L588.8 347.7M520.2 282.9L550.4 388.8M497.3 374.8L573.1 296.5M706.8 246L749 239.6L801.1 253.7L758.9 259.7L706.8 246M699.9 311.8L742.1 304.5L794.2 318.5L752.5 325.4L699.9 311.8M706.8 246L699.9 311.8M749 239.6L742.1 304.5M801.1 253.7L794.2 318.5M758.9 259.7L752.5 325.4M923 327L883.7 386.2" stroke="#1a1a1a" stroke-width="1.35" fill="none" stroke-linejoin="round" stroke-linecap="round"/><ellipse cx="919.2" cy="315.5" rx="14.5" ry="11" transform="rotate(28 919.2 315.5)" stroke="#222" stroke-width="1.4" fill="none"/><path d="M829 401.5L877 375.5" stroke="#222" stroke-width="0.8"/><ellipse cx="877.2" cy="375.3" rx="16" ry="10" transform="rotate(33 877.2 375.3)" stroke="#1ea01e" stroke-width="1.8" fill="none"/><g transform="translate(838 360.5) rotate(33.5)"><path d="M-15.5 0 L-15.5 72.5 A15.5 10 0 0 0 15.5 72.5 L15.5 0 Z" fill="url(#cyl)" stroke="#2a0000" stroke-width="1.1"/><path d="M11 7.2 L11 79.7" stroke="#2a0000" stroke-width="1.1" fill="none"/><ellipse cx="0" cy="0" rx="15.5" ry="10" fill="#8e0c0c" stroke="#2a0000" stroke-width="1.3"/></g><path d="M797.5 415V428M791 421.5H804" stroke="#222" stroke-width="3.2"/><path d="M797.5 416V427M792 421.5H803" stroke="#fff" stroke-width="1.6"/><path d="M809 423.5V436M815.5 423.5V436M805.5 427H819M805.5 432.5H819" stroke="#16a080" stroke-width="2"/><path d="M1143.5 600L1145 583.5" stroke="#2a2aa8" stroke-width="1.5"/><path d="M1145.2 580.5l-1.9 4.5h3.6z" fill="#2a2aa8"/><path d="M1143.5 600L1152.5 598" stroke="#22a022" stroke-width="2"/><path d="M1143.5 600.5L1157 604.5" stroke="#a82222" stroke-width="2"/><path d="M1160.5 605.3l-5.5-3.8-0.8 5z" fill="#a82222"/><text x="1147.3" y="581.5" font-family="Liberation Sans" font-size="8" fill="#111">Z</text><text x="1155" y="599" font-family="Liberation Sans" font-size="8" fill="#111">Y</text><text x="1162.5" y="606.5" font-family="Liberation Sans" font-size="8" fill="#111">X</text></svg><div class="a" style="left:1180.5px;top:79px;width:8px;height:4px;background:repeating-linear-gradient(90deg,#cfccc8 0 1px,#fbfbfa 1px 2px,transparent 2px 3px)"></div><div class="btn" style="left:1173.5px;top:86.5px;width:21.5px;height:21px;border-color:#c3bfb9;border-radius:4px;background:linear-gradient(#f6f5f4,#ebe9e6)"></div><svg class="a" style="left:1174px;top:87.0px" width="20" height="20" viewBox="0 0 20 20"><path d="M6.8 9V6.5A3.2 3.2 0 0 1 13.2 6.5V9" stroke="#14a07e" stroke-width="2" fill="none"/><rect x="5" y="9" width="10" height="8" rx="1" fill="#14a07e" stroke="#0b5f48" stroke-width="0.6"/><path d="M6.5 10.5V15.5" stroke="#7fd0b8" stroke-width="1"/></svg><div class="btn" style="left:1173.5px;top:110.5px;width:21.5px;height:21px;border-color:#c3bfb9;border-radius:4px;background:linear-gradient(#f6f5f4,#ebe9e6)"></div><svg class="a" style="left:1174px;top:111.0px" width="20" height="20" viewBox="0 0 20 20"><path d="M3 17L17 4" stroke="#14a07e" stroke-width="2.4"/><ellipse cx="10" cy="10.5" rx="3.5" ry="2.6" transform="rotate(-42 10 10.5)" fill="#14a07e"/></svg><div class="btn" style="left:1173.5px;top:134.5px;width:21.5px;height:21px;border-color:#c3bfb9;border-radius:4px;background:linear-gradient(#f6f5f4,#ebe9e6)"></div><svg class="a" style="left:1174px;top:135.0px" width="20" height="20" viewBox="0 0 20 20"><path d="M10 3V15M3.5 16H16.5" stroke="#14a07e" stroke-width="2.5" fill="none"/></svg><div class="btn" style="left:1173.5px;top:158.5px;width:21.5px;height:21px;border-color:#c3bfb9;border-radius:4px;background:linear-gradient(#f6f5f4,#ebe9e6)"></div><svg class="a" style="left:1174px;top:159.0px" width="20" height="20" viewBox="0 0 20 20"><path d="M6.9 4.6V15.8M13.3 4.6V15.8M4.9 6.7H15.6M4.9 13.3H15.6" stroke="#0b5f48" stroke-width="3.9" stroke-linecap="round"/><path d="M6.9 4.6V15.8M13.3 4.6V15.8M4.9 6.7H15.6M4.9 13.3H15.6" stroke="#14a07e" stroke-width="2.9" stroke-linecap="round"/><rect x="8.6" y="8.4" width="3" height="3.2" fill="#efeeec"/></svg><div class="btn" style="left:1173.5px;top:182.5px;width:21.5px;height:21px;border-color:#c3bfb9;border-radius:4px;background:linear-gradient(#f6f5f4,#ebe9e6)"></div><svg class="a" style="left:1174px;top:183.0px" width="20" height="20" viewBox="0 0 20 20"><path d="M4 4L16 16M16 4L4 16" stroke="#14a07e" stroke-width="3.2"/></svg><div class="btn" style="left:1173.5px;top:206.5px;width:21.5px;height:21px;border-color:#c3bfb9;border-radius:4px;background:linear-gradient(#f6f5f4,#ebe9e6)"></div><svg class="a" style="left:1174px;top:207.0px" width="20" height="20" viewBox="0 0 20 20"><path d="M4 5.5L16 11M4 10L16 15.5" stroke="#14a07e" stroke-width="2.4"/></svg><div class="btn" style="left:1173.5px;top:230.5px;width:21.5px;height:21px;border-color:#c3bfb9;border-radius:4px;background:linear-gradient(#d8d6d2,#e4e2df)"></div><svg class="a" style="left:1174px;top:231.0px" width="20" height="20" viewBox="0 0 20 20"><path d="M6 14L16 5" stroke="#14a07e" stroke-width="2.2"/><circle cx="5" cy="15" r="2.8" fill="#14a07e"/></svg><div class="btn" style="left:1173.5px;top:254.5px;width:21.5px;height:21px;border-color:#c3bfb9;border-radius:4px;background:linear-gradient(#f6f5f4,#ebe9e6)"></div><svg class="a" style="left:1174px;top:255.0px" width="20" height="20" viewBox="0 0 20 20"><path d="M10 4L16 10L10 16L4 10Z" fill="none" stroke="#14a07e" stroke-width="1.6"/><circle cx="10" cy="4" r="2.2" fill="#14a07e"/><circle cx="16" cy="10" r="2.2" fill="#14a07e"/><circle cx="10" cy="16" r="2.2" fill="#14a07e"/><circle cx="4" cy="10" r="2.2" fill="#14a07e"/></svg><div class="btn" style="left:1173.5px;top:278.5px;width:21.5px;height:21px;border-color:#c3bfb9;border-radius:4px;background:linear-gradient(#d8d6d2,#e4e2df)"></div><svg class="a" style="left:1174px;top:279.0px" width="20" height="20" viewBox="0 0 20 20"><circle cx="10" cy="10" r="6" fill="none" stroke="#14a07e" stroke-width="2.2"/><circle cx="10" cy="10" r="2.2" fill="none" stroke="#14a07e" stroke-width="1.5"/></svg><div class="btn" style="left:1173.5px;top:302.5px;width:21.5px;height:21px;border-color:#c3bfb9;border-radius:4px;background:linear-gradient(#f6f5f4,#ebe9e6)"></div><svg class="a" style="left:1174px;top:303.0px" width="20" height="20" viewBox="0 0 20 20"><circle cx="4.5" cy="10" r="2.2" fill="#14a07e"/><circle cx="10" cy="10" r="2.2" fill="#14a07e"/><circle cx="15.5" cy="10" r="2.2" fill="#14a07e"/><path d="M4 10H16" stroke="#14a07e"/></svg><div class="btn" style="left:1173.5px;top:326.5px;width:21.5px;height:21px;border-color:#c3bfb9;border-radius:4px;background:linear-gradient(#f6f5f4,#ebe9e6)"></div><svg class="a" style="left:1174px;top:327.0px" width="20" height="20" viewBox="0 0 20 20"><path d="M3.5 10.5L14 16.5" stroke="#14a07e" stroke-width="3"/><circle cx="14" cy="6" r="2.3" fill="#14a07e"/></svg><div class="btn" style="left:1173.5px;top:350.5px;width:21.5px;height:21px;border-color:#c3bfb9;border-radius:4px;background:linear-gradient(#f6f5f4,#ebe9e6)"></div><svg class="a" style="left:1174px;top:351.0px" width="20" height="20" viewBox="0 0 20 20"><path d="M10 4V16M4 10H16" stroke="#14a07e" stroke-width="3.2"/></svg><div class="btn" style="left:1173.5px;top:374.5px;width:21.5px;height:21px;border-color:#c3bfb9;border-radius:4px;background:linear-gradient(#f6f5f4,#ebe9e6)"></div><svg class="a" style="left:1174px;top:375.0px" width="20" height="20" viewBox="0 0 20 20"><path d="M5 15H12V9M7 9H14M10 6V13" stroke="#14a07e" stroke-width="1.6" fill="none"/><path d="M3 13V17M14 4V8" stroke="#14a07e" stroke-width="1.2"/></svg><div class="btn" style="left:1173.5px;top:398.5px;width:21.5px;height:21px;border-color:#c3bfb9;border-radius:4px;background:linear-gradient(#f6f5f4,#ebe9e6)"></div><svg class="a" style="left:1174px;top:399.0px" width="20" height="20" viewBox="0 0 20 20"><rect x="3.5" y="3.5" width="13" height="13" rx="1" fill="#14a07e" stroke="#0b5f48" stroke-width="0.7"/><circle cx="7" cy="13" r="1.2" fill="none" stroke="#d8f0e8" stroke-width="0.7"/></svg><div class="a" style="left:248px;top:657.5px;width:949px;height:1px;background:#d3d0cc"></div><div class="a" style="left:248.5px;top:628px;width:179.5px;height:30px;background:#f8f8f7;border:1px solid #c2beb8;border-top:none;border-radius:0 0 3px 3px"></div><svg class="a" style="left:254px;top:635px" width="16" height="16" viewBox="0 0 16 16"><path d="M1.3 1.4H8.4V4.2H4.3V6.2H7.2V8.8H4.3V12.9H1.3Z" fill="#f02a10"/><rect x="-1.1" y="-4.9" width="2.2" height="2.2" transform="translate(9.5 8.9) rotate(0)" fill="#15309a"/><rect x="-1.1" y="-4.9" width="2.2" height="2.2" transform="translate(9.5 8.9) rotate(40)" fill="#15309a"/><rect x="-1.1" y="-4.9" width="2.2" height="2.2" transform="translate(9.5 8.9) rotate(80)" fill="#15309a"/><rect x="-1.1" y="-4.9" width="2.2" height="2.2" transform="translate(9.5 8.9) rotate(120)" fill="#15309a"/><rect x="-1.1" y="-4.9" width="2.2" height="2.2" transform="translate(9.5 8.9) rotate(160)" fill="#15309a"/><rect x="-1.1" y="-4.9" width="2.2" height="2.2" transform="translate(9.5 8.9) rotate(200)" fill="#15309a"/><rect x="-1.1" y="-4.9" width="2.2" height="2.2" transform="translate(9.5 8.9) rotate(240)" fill="#15309a"/><rect x="-1.1" y="-4.9" width="2.2" height="2.2" transform="translate(9.5 8.9) rotate(280)" fill="#15309a"/><rect x="-1.1" y="-4.9" width="2.2" height="2.2" transform="translate(9.5 8.9) rotate(320)" fill="#15309a"/><circle cx="9.5" cy="8.9" r="3.4" fill="#2248b8"/><circle cx="9.5" cy="8.9" r="1.3" fill="#fff"/></svg><div class="t" style="left:277px;top:634.5px;font-size:13.5px">T13-ejemplo-ini : 1*</div><svg class="a" style="left:405px;top:637px" width="13" height="12" viewBox="0 0 13 12"><path d="M2.3 1.8L10.7 10.2M10.7 1.8L2.3 10.2" stroke="#585858" stroke-width="3" stroke-linecap="round"/></svg><div class="t" style="left:1083px;top:666px;font-size:13.2px">109.88 x 65.84 mm</div></body></html>
